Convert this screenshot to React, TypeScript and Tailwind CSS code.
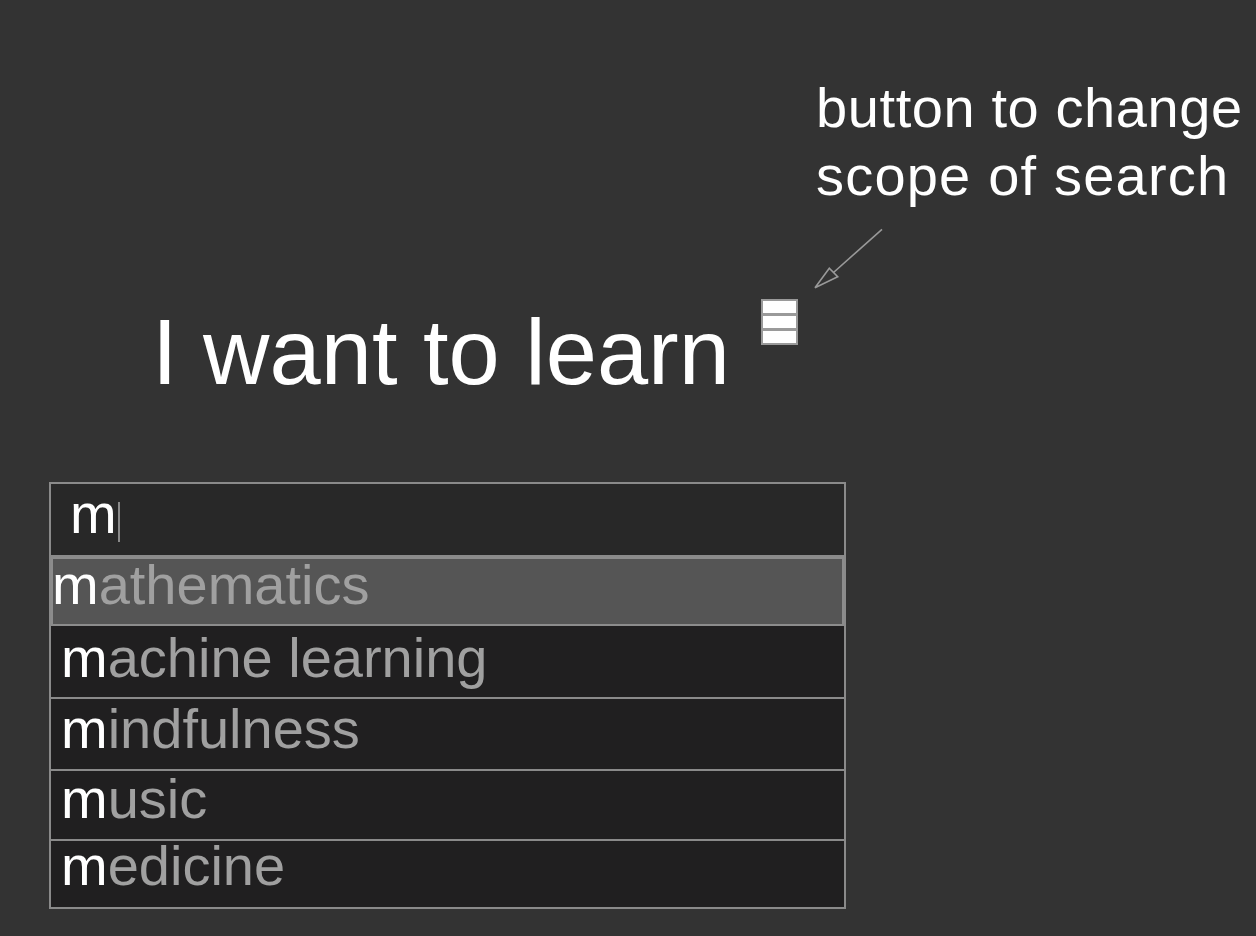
import React from 'react';

interface Suggestion {
  label: string;
  rowClass: string;
}

const suggestions: Suggestion[] = [
  { label: 'machine learning', rowClass: 'h-[71px] pt-[4px] pl-[10px]' },
  { label: 'mindfulness', rowClass: 'h-[72px] pt-[2px] pl-[10px] border-t-2 border-[#8a8a8a]' },
  { label: 'music', rowClass: 'h-[70px] pt-0 pl-[10px] border-t-2 border-[#8a8a8a]' },
  { label: 'medicine', rowClass: 'h-[68px] pl-[10px] border-t-2 border-[#8a8a8a] leading-[50px]' }
];

function Highlight({ text, query }: { text: string; query: string }) {
  return (
    <span>
      <span className="text-white">{text.slice(0, query.length)}</span>
      <span className="text-[#a0a0a0]">{text.slice(query.length)}</span>
    </span>
  );
}

function ScopeButton() {
  return (
    <button className="w-[37px] h-[46px] bg-[#9a9a9a] p-[2px] flex flex-col gap-[3px]" aria-label="change scope">
      <span className="flex-1 w-full bg-white" />
      <span className="flex-1 w-full bg-white" />
      <span className="flex-1 w-full bg-white" />
    </button>
  );
}

export default function App() {
  const query = 'm';

  return (
    <div className="relative w-full h-[936px] bg-[#333333] overflow-hidden font-['Liberation_Sans',Arial,sans-serif]">
      {/* annotation */}
      <div className="pt-[74px] pl-[816px] text-[56px] leading-[68px] tracking-[0.6px] text-white">
        <p>button to change</p>
        <p className="tracking-[1.2px]">scope of search</p>
      </div>
      <svg className="absolute left-[810px] top-[224px]" width="80" height="70" viewBox="0 0 80 70" fill="none">
        <line x1="72" y1="5.3" x2="23.5" y2="48.5" stroke="#999" strokeWidth="1.6" />
        <polygon points="5,63.7 19.3,44.3 27.7,52.7" stroke="#999" strokeWidth="1.6" strokeLinejoin="miter" />
      </svg>

      {/* heading */}
      <div className="mt-[89px] flex items-start">
        <h1 className="ml-[152px] mt-[7px] text-[92px] leading-none text-white font-normal">I want to learn</h1>
        <div className="ml-[31px]">
          <ScopeButton />
        </div>
      </div>

      {/* search box */}
      <div className="mt-[84px] ml-[49px] w-[797px] border-2 border-[#8a8a8a] text-[56px] leading-none">
        <div className="h-[73px] bg-[#282828] border-b-2 border-[#8a8a8a] pt-[2px] pl-[19px] flex items-start">
          <span className="text-white">{query}</span>
          <span className="ml-[1px] mt-[16px] w-[2px] h-[40px] bg-[#8a8a8a]" />
        </div>
        <div className="h-[69px] bg-[#555555] border-2 border-[#8c8c8c]">
          <div className="-ml-[1px] -mt-[2px]">
            <Highlight text="mathematics" query={query} />
          </div>
        </div>
        <div className="bg-[#201f20]">
          {suggestions.map((s) => (
            <div key={s.label} className={s.rowClass}>
              <Highlight text={s.label} query={query} />
            </div>
          ))}
        </div>
      </div>
    </div>
  );
}
